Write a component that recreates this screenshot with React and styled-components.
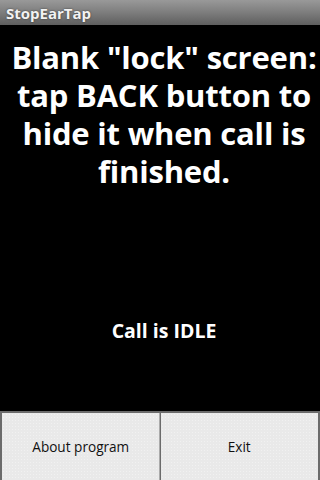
import React from "react";
import styled, { createGlobalStyle } from "styled-components";

const Global = createGlobalStyle`
  html, body { margin: 0; padding: 0; background: #000; }
  * { box-sizing: border-box; }
`;

const Screen = styled.div`
  width: 320px;
  height: 480px;
  display: flex;
  flex-direction: column;
  background: #000;
  font-family: "Open Sans", "Noto Sans", "DejaVu Sans", sans-serif;
  overflow: hidden;
`;

const TitleBar = styled.div`
  height: 25px;
  display: flex;
  align-items: center;
  padding-left: 6px;
  background: linear-gradient(#999 0%, #7d7d7d 50%, #5e5e5e 100%);
  color: #f2f2f2;
  font-weight: 700;
  font-size: 15px;
  text-shadow: 0 0 2px rgba(0,0,0,0.6);
`;

const Body = styled.div`
  flex: 1;
  display: flex;
  flex-direction: column;
  align-items: center;
  padding-left: 8px;
`;

const Headline = styled.h1`
  margin: 13px 0 0;
  color: #fff;
  font-size: 31px;
  line-height: 38px;
  font-weight: 700;
  text-align: center;
  letter-spacing: -0.2px;
  white-space: nowrap;
`;

const Status = styled.div`
  margin-top: 127px;
  color: #fff;
  font-size: 19.5px;
  font-weight: 700;
`;

const ButtonBar = styled.div`
  height: 69px;
  display: flex;
  background: #6b6b6b;
  padding: 2px 2px 0 2px;
  gap: 1px;
`;

const Button = styled.button`
  flex: 1;
  border: none;
  margin: 0;
  padding: 0;
  background-color: #e9e9e9;
  background-image: radial-gradient(#f1f1f1 0.6px, transparent 0.7px);
  background-size: 3px 3px;
  color: #111;
  font-family: inherit;
  font-size: 13.6px;
  font-weight: 400;
  box-shadow: ${p => (p.$divider ? "inset -1px 0 0 #aaa" : "none")};
`;

export default function App() {
  return (
    <Screen>
      <Global />
      <TitleBar>StopEarTap</TitleBar>
      <Body>
        <Headline>
          Blank "lock" screen:
          <br />
          tap BACK button to
          <br />
          hide it when call is
          <br />
          finished.
        </Headline>
        <Status>Call is IDLE</Status>
      </Body>
      <ButtonBar>
        <Button $divider>About program</Button>
        <Button>Exit</Button>
      </ButtonBar>
    </Screen>
  );
}
